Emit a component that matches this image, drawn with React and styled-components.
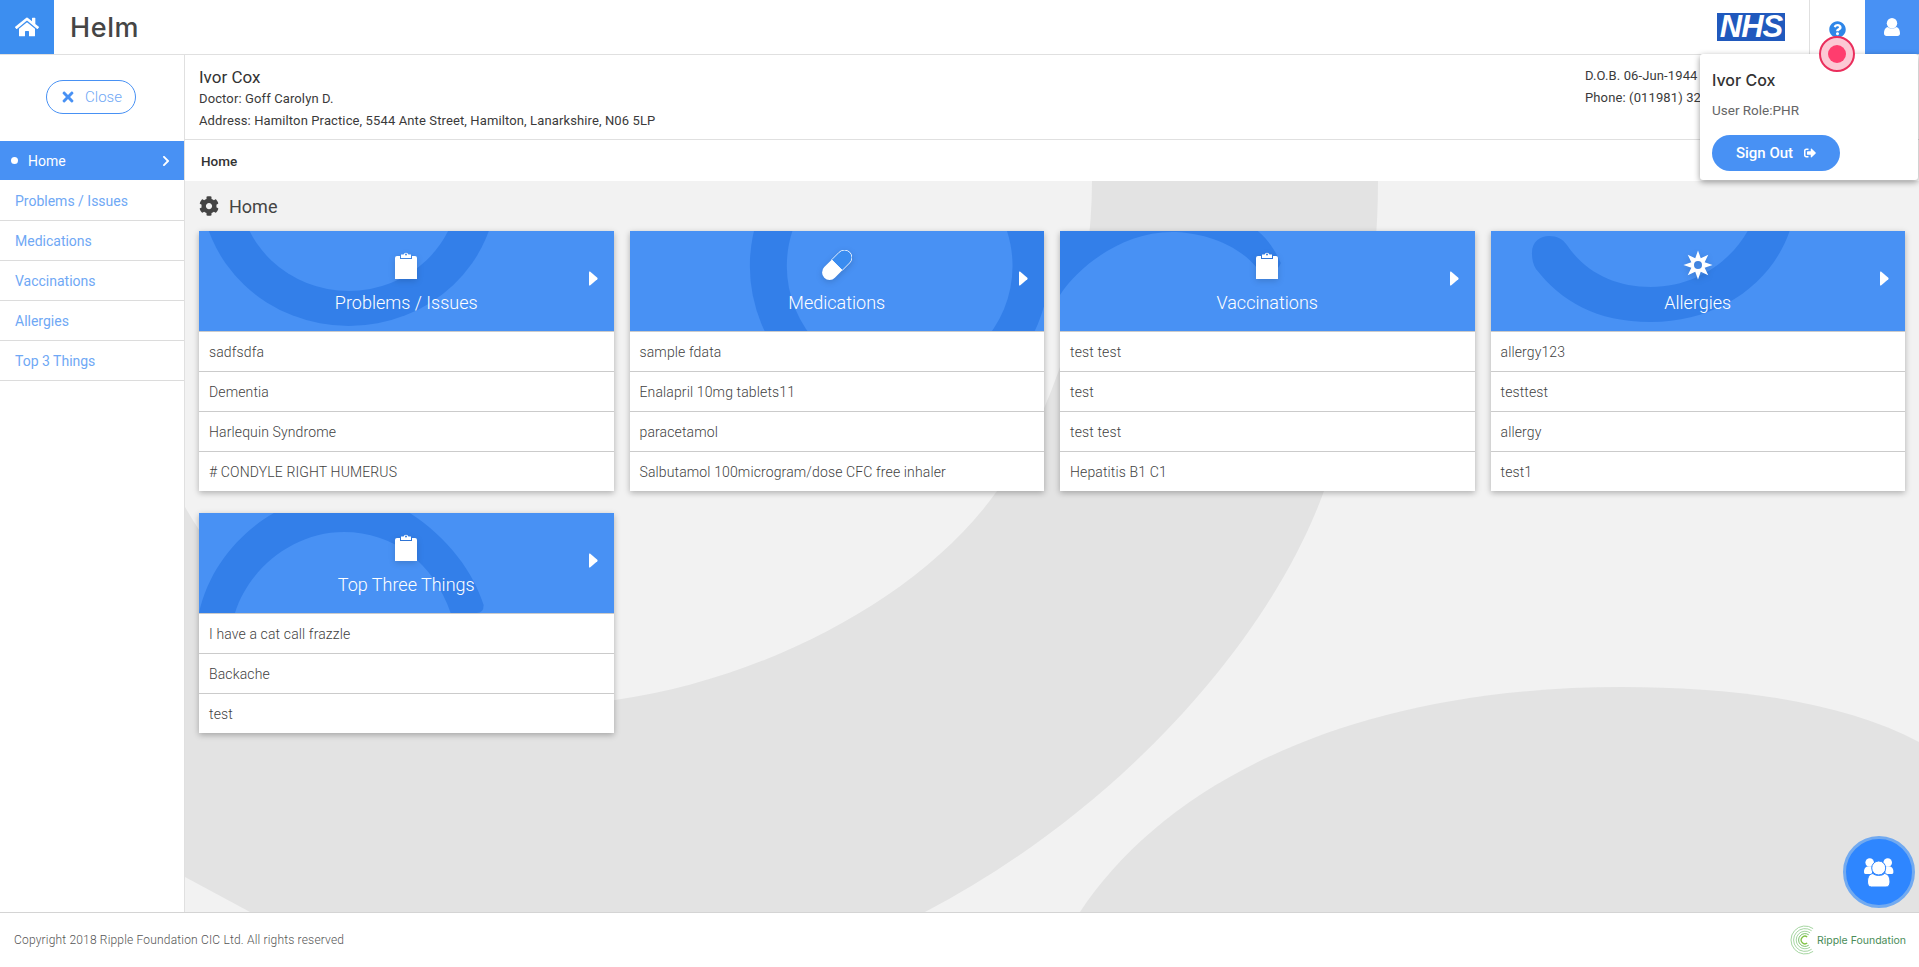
import React from 'react';
import styled, { createGlobalStyle } from 'styled-components';
import { FaHome, FaQuestionCircle, FaCog, FaTimes, FaChevronRight, FaSignOutAlt } from 'react-icons/fa';

const GlobalStyle = createGlobalStyle`
  html, body { margin: 0; padding: 0; height: 100%; overflow: hidden; background: #fff; }
  * { box-sizing: border-box; }
  body { font-family: Roboto, "Liberation Sans", sans-serif; color: #444; }
`;

const Page = styled.div`
  position: relative;
  height: 100vh;
  display: flex;
  flex-direction: column;
  overflow: hidden;
`;

const TopBar = styled.header`
  flex: 0 0 55px;
  display: flex;
  align-items: stretch;
  background: #fff;
  border-bottom: 1px solid #e0e0e0;
`;

const HomeBlock = styled.div`
  width: 54px;
  display: flex;
  align-items: center;
  justify-content: center;
  background: #3c8ef0;
  color: #fff;
  font-size: 24px;
`;

const Logo = styled.div`
  margin-left: 16px;
  align-self: center;
  font-family: Inter, sans-serif;
  font-size: 27px;
  font-weight: 500;
  color: #454545;
  letter-spacing: 0.6px;
`;

const TopRight = styled.div`
  margin-left: auto;
  display: flex;
  align-items: stretch;
`;

const NhsBox = styled.div`
  align-self: center;
  width: 68px;
  height: 28px;
  margin-right: 24px;
  background: #2059bd;
  color: #fff;
  display: flex;
  align-items: center;
  justify-content: center;
  font-family: "Liberation Sans", sans-serif;
  font-size: 31px;
  font-weight: 700;
  font-style: italic;
  letter-spacing: -1px;
`;

const HelpCell = styled.div`
  width: 56px;
  border-left: 1px solid #e0e0e0;
  display: flex;
  align-items: center;
  justify-content: center;
  color: #2e86e8;
  font-size: 17px;
  padding-top: 4px;
`;

const UserCell = styled.div`
  width: 54px;
  background: #4891f4;
  display: flex;
  align-items: center;
  justify-content: center;
`;

const Body = styled.div`
  flex: 1;
  display: flex;
  min-height: 0;
`;

const Sidebar = styled.aside`
  flex: 0 0 185px;
  background: #fff;
  border-right: 1px solid #e0e0e0;
`;

const CloseArea = styled.div`
  height: 86px;
  display: flex;
  align-items: center;
  justify-content: center;
  padding: 0 2px 2px 0;
`;

const CloseButton = styled.button`
  width: 90px;
  height: 34px;
  border: 1px solid #4891f4;
  border-radius: 17px;
  background: #fff;
  color: #6fa8f5;
  display: flex;
  align-items: center;
  justify-content: center;
  gap: 9px;
  font-family: inherit;
  font-size: 15px;
  font-weight: 300;
  padding: 0;
  svg { color: #4891f4; font-size: 16px; }
`;

const NavItem = styled.div`
  height: 40px;
  display: flex;
  align-items: center;
  padding: 0 12px 0 ${(p) => (p.$active ? '11px' : '15px')};
  font-size: 14px;
  color: ${(p) => (p.$active ? '#fff' : '#6fa8f5')};
  background: ${(p) => (p.$active ? '#4891f4' : '#fff')};
  border-bottom: 1px solid ${(p) => (p.$active ? '#fff' : '#dcdcdc')};
  svg { margin-left: auto; font-size: 12px; }
`;

const Bullet = styled.span`
  width: 7px;
  height: 7px;
  border-radius: 50%;
  background: #fff;
  margin-right: 10px;
`;

const Content = styled.main`
  flex: 1;
  min-width: 0;
  display: flex;
  flex-direction: column;
`;

const Banner = styled.section`
  flex: 0 0 85px;
  background: #fff;
  border-bottom: 1px solid #e0e0e0;
  padding: 12px 14px 0;
  display: flex;
  justify-content: space-between;
`;

const PatientName = styled.div`
  font-size: 17px;
  line-height: 20px;
  color: #333;
  margin-bottom: 1px;
`;

const BannerLine = styled.div`
  font-size: 13px;
  font-weight: 400;
  line-height: 22px;
  letter-spacing: 0.12px;
  color: #3a3a3a;
`;

const BannerRight = styled.div`
  width: 320px;
  margin-top: -2px;
`;

const Crumb = styled.div`
  flex: 0 0 41px;
  background: #fff;
  display: flex;
  align-items: center;
  padding-left: 16px;
  font-size: 13.5px;
  font-weight: 500;
  color: #333;
`;

const Stage = styled.div`
  position: relative;
  flex: 1;
  min-height: 0;
  background: #f2f2f2;
  padding: 0 14px;
`;

const StageArt = styled.svg`
  position: absolute;
  inset: 0;
  width: 100%;
  height: 100%;
`;

const SectionTitle = styled.h2`
  position: relative;
  margin: 0;
  height: 50px;
  display: flex;
  align-items: center;
  gap: 10px;
  font-size: 18px;
  font-weight: 400;
  color: #444;
  svg { font-size: 20px; }
`;

const CardGrid = styled.div`
  position: relative;
  display: grid;
  grid-template-columns: repeat(4, 1fr);
  column-gap: 16px;
  row-gap: 22px;
  align-items: start;
`;

const Card = styled.article`
  background: #fff;
  box-shadow: 0 2px 6px rgba(0, 0, 0, 0.28);
`;

const CardHead = styled.div`
  position: relative;
  height: 100px;
  background: #4891f4;
  color: #fff;
  overflow: hidden;
  display: flex;
  flex-direction: column;
  align-items: center;
  padding-top: 19px;
`;

const HeadArt = styled.svg`
  position: absolute;
  inset: 0;
  width: 100%;
  height: 100%;
`;

const HeadIcon = styled.div`
  position: relative;
  height: 30px;
  display: flex;
  align-items: center;
  filter: drop-shadow(0 2px 3px rgba(0, 0, 0, 0.15));
`;

const CardTitle = styled.div`
  position: relative;
  margin-top: 12px;
  font-size: 18px;
  font-weight: 300;
  line-height: 22px;
`;

const HeadArrow = styled.svg`
  position: absolute;
  top: 40px;
  right: 16px;
  width: 9px;
  height: 15px;
`;

const CardRow = styled.div`
  height: 40px;
  display: flex;
  align-items: center;
  padding: 0 10px;
  font-size: 14px;
  font-weight: 300;
  letter-spacing: 0.13px;
  color: #3f3f3f;
  border-top: 1px solid #cbcbcb;
  &:first-of-type { border-top: 1px solid #dfe9f8; }
`;

const Footer = styled.footer`
  flex: 0 0 55px;
  position: relative;
  background: #fff;
  border-top: 1px solid #d4d4d4;
  display: flex;
  align-items: center;
  justify-content: space-between;
  padding: 0 13px 0 14px;
  font-size: 12px;
  font-weight: 300;
  color: #555;
  letter-spacing: 0.18px;
`;

const Ripple = styled.div`
  display: flex;
  align-items: center;
  color: #4a8c58;
  font-family: Inter, sans-serif;
  font-size: 10.5px;
  font-weight: 400;
  letter-spacing: 0;
  svg { margin-right: -3px; }
`;

const UserMenu = styled.div`
  position: absolute;
  top: 54px;
  right: 1px;
  width: 218px;
  height: 126px;
  background: #fff;
  border-radius: 3px;
  box-shadow: 0 2px 6px rgba(0, 0, 0, 0.4);
  padding: 16px 12px;
`;

const MenuName = styled.div`
  font-family: Inter, sans-serif;
  font-size: 16px;
  font-weight: 500;
  line-height: 20px;
  color: #333;
`;

const MenuRole = styled.div`
  font-size: 13.5px;
  line-height: 20px;
  margin-top: 10px;
  color: #666;
`;

const SignOut = styled.button`
  width: 128px;
  height: 36px;
  margin-top: 15px;
  border: none;
  border-radius: 18px;
  background: #4891f4;
  color: #fff;
  font-family: inherit;
  font-size: 15px;
  font-weight: 500;
  display: flex;
  align-items: center;
  justify-content: center;
  gap: 11px;
  padding: 0;
  svg { font-size: 12px; }
`;

const ClickRing = styled.div`
  position: absolute;
  top: 36px;
  left: 1819px;
  width: 36px;
  height: 36px;
  border-radius: 50%;
  border: 2px solid #ea2e5c;
  background: #fcc8d4;
  display: flex;
  align-items: center;
  justify-content: center;
  &::after {
    content: '';
    width: 18px;
    height: 18px;
    border-radius: 50%;
    background: #ff3d6e;
  }
`;

const Fab = styled.div`
  position: absolute;
  left: 1843px;
  top: 836px;
  width: 72px;
  height: 72px;
  border-radius: 50%;
  background: #2e86ff;
  border: 3px solid #72aaf0;
  display: flex;
  align-items: center;
  justify-content: center;
`;

const DARK = '#337fe9';
const LIGHT = '#4891f4';

const UserIcon = () => (
  <svg width="16" height="18" viewBox="0 0 16 18" fill="#fff">
    <circle cx="8" cy="5.2" r="5.2" />
    <path d="M0 15.5C0 11 2 9.5 4 9C5.5 11 10.5 11 12 9C14 9.5 16 11 16 15.5C16 17 15 18 13.5 18H2.5C1 18 0 17 0 15.5Z" />
  </svg>
);

const UsersIcon = () => (
  <svg width="30" height="29" viewBox="0 0 30 29" fill="#fff">
    <circle cx="5.7" cy="4.5" r="4.3" />
    <circle cx="23.7" cy="4.5" r="4.3" />
    <path d="M0 14C0 10 2 8.5 4 8.5H8V16H1.5C.5 16 0 15 0 14Z" />
    <path d="M29.4 14C29.4 10 27.4 8.5 25.4 8.5H21.4V16H27.9C28.9 16 29.4 15 29.4 14Z" />
    <circle cx="14.7" cy="10" r="7" stroke="#2e86ff" strokeWidth="1" />
    <path stroke="#2e86ff" strokeWidth="1" d="M3.5 24C3.5 18 6 16 9 15.5C11 18 18.5 18 20.5 15.5C23.5 16 26 18 26 24C26 27 24.5 29 22 29H7.5C5 29 3.5 27 3.5 24Z" />
  </svg>
);

const Clipboard = () => (
  <svg width="22" height="28" viewBox="0 0 22 28">
    <path fill="#fff" d="M2 5h3v3h12V5h3q2 0 2 2v21H0V7q0-2 2-2z" />
    <path fill="#fff" fillRule="evenodd" d="M6 7V3.5h2.6a2.5 2.5 0 0 1 4.8 0H16V7zM11 2.6a1 1 0 1 0 0 2 1 1 0 0 0 0-2z" />
  </svg>
);

const Pill = () => (
  <svg width="30" height="30" viewBox="0 0 30 30">
    <g transform="rotate(45 15 15)">
      <path fill="#3a8cf0" stroke="#fff" strokeWidth="0.8" d="M7.5 15V4.5a7.5 7.5 0 0 1 15 0V15z" />
      <path fill="#fff" d="M7.5 15h15v10.5a7.5 7.5 0 0 1-15 0z" />
    </g>
  </svg>
);

const sunPoints = Array.from({ length: 16 }, (_, i) => {
  const r = i % 2 === 0 ? 14.5 : 7.2;
  const a = (i * Math.PI) / 8 - Math.PI / 2;
  return `${(15 + r * Math.cos(a)).toFixed(2)} ${(15 + r * Math.sin(a)).toFixed(2)}`;
});

const Sun = () => (
  <svg width="30" height="30" viewBox="0 0 30 30">
    <path fill="#fff" fillRule="evenodd" d={`M${sunPoints.join('L')}Z M15 11a4 4 0 1 0 0 8 4 4 0 0 0 0-8z`} />
  </svg>
);

const arts = {
  problems: (
    <>
      <ellipse cx="150" cy="-45" rx="148" ry="140" fill={DARK} />
      <ellipse cx="150" cy="-45" rx="110" ry="105" fill={LIGHT} />
    </>
  ),
  medications: (
    <>
      <circle cx="270" cy="35" r="150" fill={DARK} />
      <circle cx="270" cy="35" r="113" fill={LIGHT} />
    </>
  ),
  vaccinations: (
    <path fill={DARK} d="M0 0H198C208 8 216 20 221 32C218 42 204 44 198 38C178 12 140 1 112 1C62 1 18 36 0 64Z" />
  ),
  allergies: (
    <path fill={DARK} d="M41 22C41 10 50 5 58 5C66 5 72 8 76 14C95 42 125 56 160 56C205 56 240 30 257 0L299 0C280 55 225 91 160 91C105 91 70 70 45 38C42 33 41 28 41 22Z" />
  ),
  top: (
    <path fill={DARK} d="M0 100C10 55 40 20 75 0H211C250 25 275 60 285 92Q285 100 278 100H252C235 50 195 19 145 19C95 19 50 55 36 100Z" />
  ),
};

const cards = [
  { key: 'problems', title: 'Problems / Issues', icon: <Clipboard />, rows: ['sadfsdfa', 'Dementia', 'Harlequin Syndrome', '# CONDYLE RIGHT HUMERUS'] },
  { key: 'medications', title: 'Medications', icon: <Pill />, rows: ['sample fdata', 'Enalapril 10mg tablets11', 'paracetamol', 'Salbutamol 100microgram/dose CFC free inhaler'] },
  { key: 'vaccinations', title: 'Vaccinations', icon: <Clipboard />, rows: ['test test', 'test', 'test test', 'Hepatitis B1 C1'] },
  { key: 'allergies', title: 'Allergies', icon: <Sun />, rows: ['allergy123', 'testtest', 'allergy', 'test1'] },
  { key: 'top', title: 'Top Three Things', icon: <Clipboard />, rows: ['I have a cat call frazzle', 'Backache', 'test'] },
];

const navItems = ['Problems / Issues', 'Medications', 'Vaccinations', 'Allergies', 'Top 3 Things'];

const arc = (r) => {
  const a = 0.95;
  const x = (v) => (15 + r * Math.cos(v)).toFixed(2);
  const y = (v) => (15 + r * Math.sin(v)).toFixed(2);
  return `M${x(-a)} ${y(-a)}A${r} ${r} 0 1 0 ${x(a)} ${y(a)}`;
};

const RippleMark = () => (
  <svg width="30" height="30" viewBox="0 0 30 30" fill="none">
    {[14, 11.4, 8.8].map((r) => (
      <path key={r} d={arc(r)} stroke="#9bd096" strokeWidth="0.9" />
    ))}
    <path d={arc(6.4)} stroke="#6cbb5a" strokeWidth="0.9" />
    <path d={arc(3.8)} stroke="#7fc242" strokeWidth="1.3" />
  </svg>
);

const App = () => (
  <Page>
    <GlobalStyle />
    <TopBar>
      <HomeBlock><FaHome /></HomeBlock>
      <Logo>Helm</Logo>
      <TopRight>
        <NhsBox>NHS</NhsBox>
        <HelpCell><FaQuestionCircle /></HelpCell>
        <UserCell><UserIcon /></UserCell>
      </TopRight>
    </TopBar>
    <Body>
      <Sidebar>
        <CloseArea>
          <CloseButton><FaTimes /> Close</CloseButton>
        </CloseArea>
        <NavItem $active><Bullet />Home<FaChevronRight /></NavItem>
        {navItems.map((item) => <NavItem key={item}>{item}</NavItem>)}
      </Sidebar>
      <Content>
        <Banner>
          <div>
            <PatientName>Ivor Cox</PatientName>
            <BannerLine>Doctor: Goff Carolyn D.</BannerLine>
            <BannerLine>Address: Hamilton Practice, 5544 Ante Street, Hamilton, Lanarkshire, N06 5LP</BannerLine>
          </div>
          <BannerRight>
            <BannerLine>D.O.B. 06-Jun-1944</BannerLine>
            <BannerLine>Phone: (011981) 32362</BannerLine>
          </BannerRight>
        </Banner>
        <Crumb>Home</Crumb>
        <Stage>
          <StageArt viewBox="185 181 1734 731" preserveAspectRatio="none">
            <path fill="#e3e3e3" d="M1092 181H1378C1378 300 1350 420 1324 491C1270 640 1120 810 925 912H250L185 877V507C260 640 420 720 615 700C760 680 920 600 997 491C1050 420 1092 300 1092 181Z" />
            <path fill="#e3e3e3" d="M1080 912C1160 790 1340 687 1622 687C1730 687 1840 700 1919 742V912Z" />
          </StageArt>
          <SectionTitle><FaCog />Home</SectionTitle>
          <CardGrid>
            {cards.map((card) => (
              <Card key={card.key}>
                <CardHead>
                  <HeadArt viewBox="0 0 415 100" preserveAspectRatio="none">{arts[card.key]}</HeadArt>
                  <HeadIcon>{card.icon}</HeadIcon>
                  <CardTitle>{card.title}</CardTitle>
                  <HeadArrow viewBox="0 0 9 14" preserveAspectRatio="none">
                    <path fill="#fff" d="M1 0.5Q0 0 0 1.5V12.5Q0 14 1 13.5L8.3 7.8Q9 7 8.3 6.2Z" />
                  </HeadArrow>
                </CardHead>
                {card.rows.map((row) => <CardRow key={row}>{row}</CardRow>)}
              </Card>
            ))}
          </CardGrid>
        </Stage>
      </Content>
    </Body>
    <Footer>
      <span>Copyright 2018 Ripple Foundation CIC Ltd. All rights reserved</span>
      <Ripple><RippleMark />Ripple Foundation</Ripple>
    </Footer>
    <UserMenu>
      <MenuName>Ivor Cox</MenuName>
      <MenuRole>User Role:PHR</MenuRole>
      <SignOut>Sign Out <FaSignOutAlt /></SignOut>
    </UserMenu>
    <ClickRing />
    <Fab><UsersIcon /></Fab>
  </Page>
);

export default App;
